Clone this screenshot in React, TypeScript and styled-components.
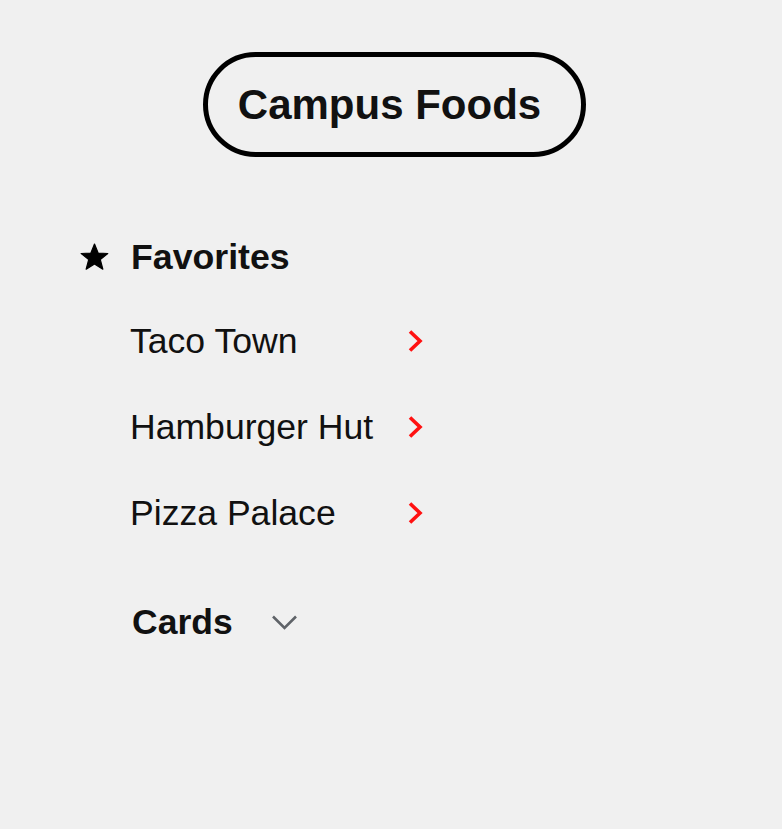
import styled, { createGlobalStyle } from 'styled-components'

const GlobalStyle = createGlobalStyle`
  html, body {
    margin: 0;
    padding: 0;
    background: #f0f0f0;
  }

  body {
    font-family: 'Liberation Sans', Arial, sans-serif;
    color: #111;
  }
`

const Page = styled.main`
  display: flex;
  flex-direction: column;
  min-height: 829px;
  padding-top: 52px;
  box-sizing: border-box;
`

const Header = styled.header`
  display: flex;
  justify-content: center;
  padding-left: 7px;
`

const TitlePill = styled.h1`
  display: flex;
  align-items: center;
  height: 105px;
  box-sizing: border-box;
  margin: 0;
  padding: 0 40px 0 30px;
  border: 5px solid #000;
  border-radius: 60px;
  font-size: 42px;
  font-weight: 700;
  line-height: 1;
  color: #111;
`

const Section = styled.section`
  display: flex;
  flex-direction: column;
  margin-top: 80px;
  padding-left: 80px;
`

const SectionHeading = styled.h2`
  display: flex;
  align-items: center;
  gap: 22px;
  margin: 0 0 44px;
  font-size: 35.7px;
  font-weight: 700;
  line-height: 40px;
`

const ItemList = styled.ul`
  display: flex;
  flex-direction: column;
  gap: 46px;
  margin: 0;
  padding: 0 0 0 50px;
  list-style: none;
`

const Item = styled.li`
  display: grid;
  grid-template-columns: 278px auto;
  align-items: center;
  font-size: 35.6px;
  line-height: 40px;
`

const Chevron = styled.svg`
  display: block;
`

const CardsToggle = styled.button`
  display: flex;
  align-items: center;
  gap: 38px;
  align-self: flex-start;
  margin-top: 69px;
  margin-left: 52px;
  padding: 0;
  border: none;
  background: none;
  font-family: inherit;
  font-size: 35.5px;
  font-weight: 700;
  line-height: 40px;
  color: #111;
  cursor: pointer;
`

const favorites = ['Taco Town', 'Hamburger Hut', 'Pizza Palace']

function StarIcon() {
  return (
    <svg width="29" height="28" viewBox="0 0 24 23" aria-hidden>
      <polygon
        points="12,0.8 15,8.2 23,8.6 16.8,13.6 18.9,21.6 12,17.2 5.1,21.6 7.2,13.6 1,8.6 9,8.2"
        fill="#000"
        strokeLinejoin="round"
        stroke="#000"
        strokeWidth="1"
      />
    </svg>
  )
}

export default function App() {
  return (
    <>
      <GlobalStyle />
      <Page>
        <Header>
          <TitlePill>Campus Foods</TitlePill>
        </Header>

        <Section>
          <SectionHeading>
            <StarIcon />
            Favorites
          </SectionHeading>
          <ItemList>
            {favorites.map((name) => (
              <Item key={name}>
                <span>{name}</span>
                <Chevron width="16" height="22" viewBox="0 0 16 22">
                  <polyline
                    points="2,1.5 12,11 2,20.5"
                    fill="none"
                    stroke="#ff1111"
                    strokeWidth="3.6"
                  />
                </Chevron>
              </Item>
            ))}
          </ItemList>

          <CardsToggle>
            Cards
            <Chevron width="27" height="17" viewBox="0 0 27 17">
              <polyline
                points="2,2.5 13.5,14 25,2.5"
                fill="none"
                stroke="#5f6368"
                strokeWidth="2.6"
              />
            </Chevron>
          </CardsToggle>
        </Section>
      </Page>
    </>
  )
}
